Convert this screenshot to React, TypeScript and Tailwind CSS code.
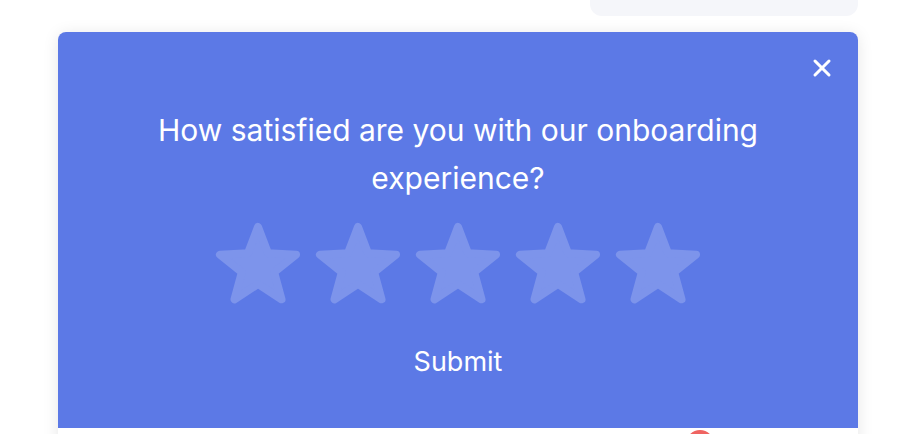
import { X } from "lucide-react";

function Star() {
  return (
    <svg width="100" height="100" viewBox="0 0 100 100" className="block">
      <polygon
        points="50,10 59.99,36.25 88.04,37.64 66.17,55.25 73.51,82.36 50,67 26.49,82.36 33.83,55.25 11.96,37.64 40.01,36.25"
        fill="#7d94eb"
        stroke="#7d94eb"
        strokeWidth="8"
        strokeLinejoin="round"
      />
    </svg>
  );
}

export default function App() {
  return (
    <div
      className="w-[916px] h-[434px] overflow-hidden bg-white"
      style={{ fontFamily: "Inter, 'Noto Sans', sans-serif" }}
    >
      {/* card peeking in from above */}
      <div className="ml-[590px] w-[268px] h-[40px] -mt-[24px] rounded-xl bg-[#f5f6fa]" />

      <div className="ml-[58px] mt-[16px] w-[800px] rounded-lg overflow-hidden bg-white shadow-[0_2px_16px_rgba(0,0,0,0.10)]">
        <div className="relative h-[396px] bg-[#5c79e6] flex flex-col items-center pt-[74px]">
          <button className="absolute top-[22px] right-[22px] text-white">
            <X size={28} strokeWidth={2.6} />
          </button>
          <h2 className="text-white text-[30px] leading-[48px] text-center w-[660px] font-normal">
            How satisfied are you with our onboarding experience?
          </h2>
          <div className="flex mt-[15px]">
            <Star />
            <Star />
            <Star />
            <Star />
            <Star />
          </div>
          <button className="mt-[27px] text-white text-[27px] leading-[36px]">Submit</button>
        </div>
        <div className="relative h-[40px] bg-white">
          <div className="absolute left-[628px] top-[2px] w-[28px] h-[28px] rounded-full bg-[#ef6461]" />
        </div>
      </div>
    </div>
  );
}
